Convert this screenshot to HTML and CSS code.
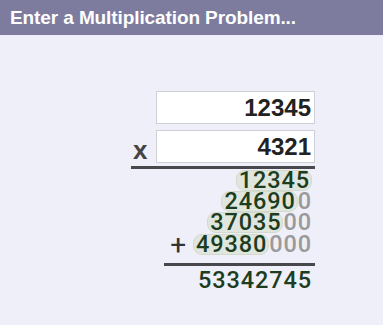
FILE: index.html
```html
<!DOCTYPE html>
<html lang="en">
<head>
    <meta charset="UTF-8">
    <meta name="viewport" content="width=device-width, initial-scale=1.0">
    <title>Multiplication</title>
    <link rel="stylesheet" href="styles.css">
</head>
<body>
    <div class="header">Enter a Multiplication Problem...</div>

    <div class="problem">
        <div class="input-row">
            <input type="text" class="num-input" value="12345">
        </div>
        <div class="input-row">
            <span class="op">x</span>
            <input type="text" class="num-input" value="4321">
        </div>
        <div class="rule"></div>

        <div class="partials">
            <div class="row"><span class="sig">12345</span></div>
            <div class="row"><span class="sig">24690</span><span class="zero">0</span></div>
            <div class="row"><span class="sig">37035</span><span class="zero">00</span></div>
            <div class="row"><span class="plus">+</span><span class="sig">49380</span><span class="zero">000</span></div>
        </div>
        <div class="rule short"></div>
        <div class="row result">53342745</div>
    </div>
</body>
</html>
```

FILE: styles.css
```css
body {
    margin: 0;
    padding: 0;
    background: #efeff9;
    font-family: "Liberation Sans", Arial, sans-serif;
}
.header {
    background: #7d7c9f;
    color: white;
    font-weight: bold;
    font-size: 19px;
    height: 35px;
    line-height: 36px;
    padding-left: 10px;
    letter-spacing: -0.1px;
}
.problem {
    width: 184px;
    margin-left: 131px;
    padding-top: 56px;
    display: flex;
    flex-direction: column;
    align-items: flex-end;
}
.input-row {
    display: flex;
    align-items: flex-end;
    justify-content: flex-end;
    width: 100%;
    margin-bottom: 6px;
}
.input-row:nth-child(2) {
    margin-bottom: 3px;
}
.num-input {
    box-sizing: border-box;
    width: 159px;
    height: 33px;
    border: 1px solid #cfcfd6;
    background: white;
    text-align: right;
    padding: 0 3px 0 0;
    margin: 0;
    font-family: "Liberation Sans", Arial, sans-serif;
    font-weight: bold;
    font-size: 24px;
    color: #222;
    outline: none;
}
.op {
    flex: 1;
    font-size: 26px;
    font-weight: bold;
    color: #444;
    line-height: 26px;
    padding-left: 2px;
}
.rule {
    width: 100%;
    height: 3px;
    background: #48484c;
}
.rule.short {
    width: 151px;
    margin-top: 8px;
}
.partials {
    display: flex;
    flex-direction: column;
    align-items: flex-end;
    padding-top: 1px;
}
.row {
    font-family: Roboto, "Liberation Sans", sans-serif;
    font-weight: 500;
    font-size: 23.5px;
    letter-spacing: 0.9px;
    line-height: 21px;
    color: #1d3d21;
    padding-right: 3px;
    display: flex;
    align-items: center;
}
.sig {
    background: #e0e6dd;
    border: 1px solid #d2dace;
    border-radius: 9px;
    padding: 0 1px 0 2px;
    line-height: 19px;
}
.zero {
    color: #9a9a9a;
}
.plus {
    color: #333;
    font-size: 28px;
    font-weight: 400;
    margin-right: 6px;
}
.partials .row:last-child {
    margin-top: 1px;
}
.result {
    margin-top: 2px;
    line-height: 24px;
}
```
